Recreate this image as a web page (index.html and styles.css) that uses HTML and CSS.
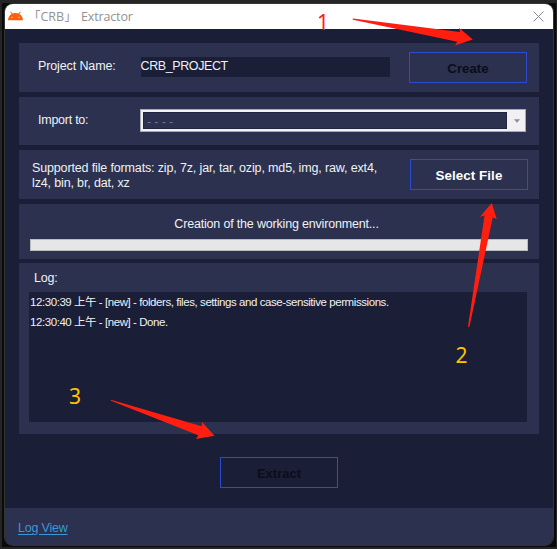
FILE: index.html
```html
<!DOCTYPE html>
<html lang="en">
<head>
<meta charset="utf-8">
<title>「CRB」 Extractor</title>
<link rel="stylesheet" href="styles.css">
</head>
<body>
<div class="backdrop">
<div class="window">
  <header class="titlebar">
    <svg class="android" width="15" height="10" viewBox="0 0 15 10"><path d="M0 9.200C.2 6.400 1.600 4.200 3.600 3L2.200.9l.7-.4L4.400 2.600Q7.500 1.400 10.600 2.600L12.100.5l.7.4L11.400 3C13.400 4.200 14.800 6.400 15 9.200Z" fill="#ff5f08"/><circle cx="4" cy="6.300" r=".6" fill="#fff"/><circle cx="11" cy="6.300" r=".6" fill="#fff"/></svg>
    <span class="title"><span class="brand">「CRB」</span><span class="app">Extractor</span></span>
    <svg class="close" width="11" height="11" viewBox="0 0 11 11"><path d="M.6.6 10.400 10.400M10.400.6.6 10.400" stroke="#858585" fill="none"/></svg>
  </header>
  <main class="content">
    <section class="panel project">
      <label class="label name">Project Name:</label>
      <div class="field"><span>CRB_PROJECT</span></div>
      <button class="btn off"><span class="create">Create</span></button>
    </section>
    <section class="panel import">
      <label class="label to">Import to:</label>
      <div class="select"><div class="value"><span>- - - -</span></div><div class="drop"><svg width="6" height="4" viewBox="0 0 6 4"><path d="M0 .3H6L3 3.700Z" fill="#8c8d93"/></svg></div></div>
    </section>
    <section class="panel files">
      <p class="formats">Supported file formats: zip, 7z, jar, tar, ozip, md5, img, raw, ext4,<br>lz4, bin, br, dat, xz</p>
      <button class="btn"><span class="pick">Select File</span></button>
    </section>
    <section class="panel progress">
      <p class="status"><span>Creation of the working environment...</span></p>
      <div class="bar"></div>
    </section>
    <section class="panel log">
      <p class="log-label">Log:</p>
      <div class="log-box">
        <p><span class="time">12:30:39 <span class="cjk">上午</span></span> - [new] - folders, files, settings and case-sensitive permissions.</p>
        <p><span class="time">12:30:40 <span class="cjk">上午</span></span> - [new] - Done.</p>
      </div>
    </section>
    <button class="btn off extract">Extract</button>
  </main>
  <footer class="footer"><a class="link">Log View</a></footer>
</div>
<svg class="notes" width="557" height="549" viewBox="0 0 557 549">
  <g fill="#ff1e0f">
    <path d="M353 18.500Q352 19.300 353 19.800L457.300 41.700 455 45.500 472.700 39.500 459 27.800 460 32Z"/>
    <path d="M468 326.500Q468.800 327.500 469.500 326.500L492.800 217.300 496.800 219.300 491.700 203 480 216.800 484.500 215.500Z"/>
    <path d="M111 399.800Q110.500 400.700 111.500 401L198.300 435.300 196 439 214.500 435.700 202 422 201.700 426.200Z"/>
  </g>
  <text x="317" y="30" class="num red">1</text>
  <text x="455.500" y="363" class="num">2</text>
  <text x="69" y="404" class="num">3</text>
</svg>
</div>
</body>
</html>
```
FILE: styles.css
```css
* { box-sizing: border-box; }
body { margin: 0; font-family: "Liberation Sans", "Noto Sans CJK SC", sans-serif; font-size: 12.5px; color: #f0f1f5; }
p { margin: 0; }
button { font: inherit; padding: 0; }
.backdrop { position: relative; width: 557px; height: 549px; background: #0a0a0b; border: solid #252525; border-width: 3px 1px 2px 2px; padding: 1px 3px 2px 3px; overflow: hidden; }
.window { width: 548px; height: 541px; display: flex; flex-direction: column; border-radius: 8px; overflow: hidden; background: #1a1e37; box-shadow: 0 0 0 1px #353532; }
.titlebar { height: 25px; flex: none; background: #fff; display: flex; align-items: center; padding: 0 9px 0 3px; color: #929292; }
.android { margin-top: -1px; }
.title { flex: 1; display: flex; font: 12.5px/24px "Open Sans", "Noto Sans CJK SC", sans-serif; white-space: pre; }
.brand { width: 53px; margin-left: 5px; }
.app { letter-spacing: -.15px; }
.close { margin-top: -1px; }
.content { height: 479px; flex: none; padding: 14px 14px 0; display: flex; flex-direction: column; }
.panel { background: #2b314e; flex: none; display: flex; }
.project { height: 49px; margin-bottom: 5px; }
.import { height: 48px; margin-bottom: 5px; }
.files { height: 49px; margin-bottom: 5px; }
.progress { height: 55px; margin-bottom: 4px; flex-direction: column; }
.log { height: 171px; flex-direction: column; }
.label { width: 103px; margin-left: 19px; white-space: nowrap; letter-spacing: -.12px; }
.to { letter-spacing: -.25px; }
.name { line-height: 46px; }
.to { line-height: 47px; }
.field { width: 249px; height: 20px; margin-top: 14px; background: #1a1e37; line-height: 18px; white-space: nowrap; letter-spacing: -.4px; text-indent: -.5px; }
.btn { width: 118px; height: 31px; margin-top: 9px; border: 1px solid #2b4bd0; background: transparent; color: #fff; font-weight: 700; font-size: 13px; line-height: 31px; text-align: center; }
.off { color: #0b0d18; }
.create { font-size: 13.3px; }
.pick { font-size: 13.4px; letter-spacing: .05px; }
.project .btn { margin-left: 19px; }
.select { width: 386px; height: 23px; margin: 12px 0 0 -1px; border: 1px solid #a9aab2; background: #f1f1f3; padding: 2px 0 2px 2px; display: flex; }
.value { width: 364px; background: #2b314e; border: 1px solid #1f2443; line-height: 19px; padding-left: 3px; color: #70747f; letter-spacing: -.15px; }
.drop { flex: 1; display: flex; align-items: center; justify-content: center; padding-left: 2px; }
.formats { width: 391px; padding: 11px 0 0 13px; line-height: 15px; white-space: nowrap; letter-spacing: -.145px; }
.status { text-align: center; line-height: 15px; margin-top: 13px; padding-right: 5px; letter-spacing: -.18px; }
.bar { width: 498px; height: 12px; margin: 7px 0 0 11px; background: #e6e6e6; border: 1px solid #bcbcbc; }
.log-label { margin: 8px 0 0 15px; line-height: 15px; letter-spacing: -.2px; }
.log-box { width: 498px; height: 130px; margin: 6px 0 0 10px; background: #1a1e37; padding: 0 1px; font-size: 11.5px; line-height: 20px; white-space: nowrap; letter-spacing: -.43px; }
.time { display: inline-block; width: 66px; }
.cjk { letter-spacing: -.5px; }
.extract { margin: 23px 0 0 201px; line-height: 32px; }
.footer { flex: 1; background: #2b314e; padding: 12px 13px; line-height: 16px; }
.link { color: #3799dc; text-decoration: underline; text-underline-offset: 2px; letter-spacing: -.2px; }
.notes { position: absolute; left: -2px; top: -3px; }
.num { font: 21px "Noto Sans", sans-serif; fill: #ffc400; }
.red { fill: #ff1e0f; }
```
